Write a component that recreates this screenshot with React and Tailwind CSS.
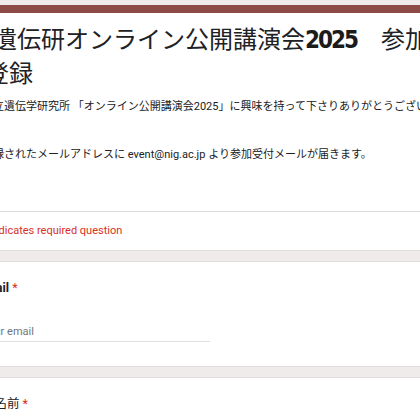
import React from 'react';

const jp = "font-['Roboto','Noto_Sans_CJK_JP',sans-serif]";

const Card = ({ children, className = '' }) => (
    <div className={`bg-white border border-[#e2dddd] rounded-lg pl-6 pr-6 ${className}`}>
        {children}
    </div>
);

const App = () => {
    return (
        <div className={`w-[420px] h-[420px] overflow-hidden bg-[#f0ebeb] ${jp}`}>
            {/* the form is wider than the window; its left edge lies off screen */}
            <div className="ml-[-43px] w-[540px] pt-[5px] flex flex-col gap-[10px]">
                {/* header card */}
                <div className="bg-white rounded-lg border-t-[8px] border-[#8c4b46] border-x border-b border-x-[#e2dddd] border-b-[#e2dddd]">
                    <div className="pl-6 pt-[10px]">
                        <h1 className="ml-[3px] text-[24px] leading-[34px] text-[#202124] font-normal indent-[8px] whitespace-nowrap">
                            遺伝研オンライン公開講演会
                            <span className="font-['DejaVu_Sans_Condensed',sans-serif] font-bold text-[24px] tracking-[-2px] text-[#1b1b1b]">2025</span>
                            {'　'}参加
                            <br />
                            登録
                        </h1>
                        <p className="mt-2 text-[11px] leading-4 text-[#202124] whitespace-nowrap">
                            国立遺伝学研究所 「オンライン公開講演会2025」に興味を持って下さりありがとうございます。
                        </p>
                        <p className="mt-8 text-[11px] leading-4 text-[#202124] whitespace-nowrap">
                            登録されたメールアドレスに event@nig.ac.jp より参加受付メールが届きます。
                        </p>
                    </div>
                    <div className="mt-[48px] border-t border-[#dadce0]" />
                    <div className="pl-6 h-[38px] flex items-center text-[11px] text-[#d93025]">
                        * Indicates required question
                    </div>
                </div>

                {/* email */}
                <Card className="h-[106px] pt-[18px]">
                    <div className="-ml-[4px] text-[12.5px] leading-4 font-bold text-[#202124]">
                        Email <span className="text-[#d93025] font-normal">*</span>
                    </div>
                    <div className="mt-[28px] w-[228px] border-b border-[#e0e0e0] pb-[1px] text-[11px] leading-4 text-[#70757a]">
                        Your email
                    </div>
                </Card>

                {/* name */}
                <Card className="h-[80px] pt-[18px]">
                    <div className="text-[12.5px] leading-4 text-[#202124]">
                        お名前 <span className="text-[#d93025]">*</span>
                    </div>
                </Card>
            </div>
        </div>
    );
};

export default App;
